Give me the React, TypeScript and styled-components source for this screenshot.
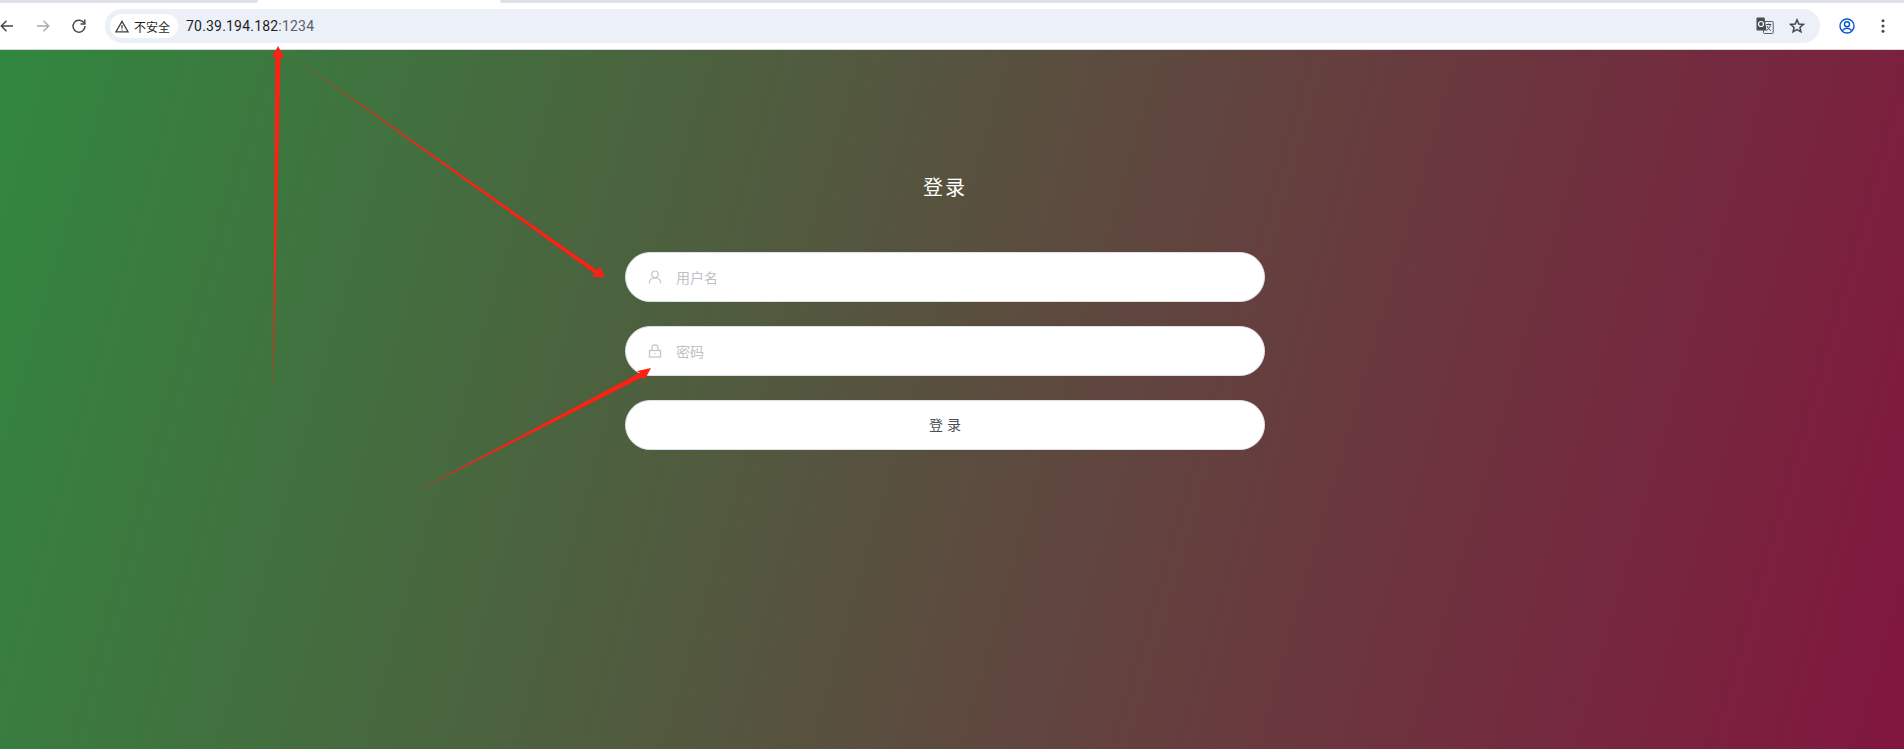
import React from "react";
import styled, { createGlobalStyle } from "styled-components";

const Global = createGlobalStyle`
  html, body { margin: 0; padding: 0; height: 100%; overflow: hidden; background: #fff; }
  #root { height: 100%; }
  * { box-sizing: border-box; }
`;

const Shell = styled.div`
  position: relative;
  height: 749px;
  width: 1904px;
  display: flex;
  flex-direction: column;
  overflow: hidden;
  font-family: "Noto Sans CJK SC", "Noto Sans", sans-serif;
`;

const Chrome = styled.header`
  flex: 0 0 50px;
  display: flex;
  flex-direction: column;
  background: #fff;
  border-bottom: 1px solid #d6d8da;
`;

const TabStrip = styled.div`
  flex: 0 0 9px;
  display: flex;
  align-items: flex-start;
`;

const TabEdge = styled.div<{ $w?: number }>`
  height: 3px;
  background: #dde3e9;
  ${(p) => (p.$w ? `flex: 0 0 ${p.$w}px; border-radius: 0 0 8px 0;` : `flex: 1; border-radius: 0 0 0 8px;`)}
`;

const ActiveTab = styled.div`
  flex: 0 0 242px;
`;

const Toolbar = styled.div`
  flex: 1;
  display: flex;
  align-items: flex-start;
  padding-right: 3px;
`;

const NavSlot = styled.div<{ $first?: boolean }>`
  flex: 0 0 36px;
  height: 34px;
  display: flex;
  align-items: center;
  justify-content: center;
  margin-left: ${(p) => (p.$first ? "-11px" : "0")};
`;

const Omnibox = styled.div`
  flex: 1;
  height: 34px;
  margin: 0 9px 0 8px;
  padding-left: 5px;
  display: flex;
  align-items: center;
  background: #ebf0f9;
  border-radius: 17px;
`;

const SecurityChip = styled.div`
  flex: 0 0 68px;
  height: 24px;
  display: flex;
  align-items: center;
  gap: 5px;
  padding-left: 5px;
  background: #fff;
  border-radius: 12px;
  font-size: 12px;
  color: #1f1f1f;
  white-space: nowrap;
`;

const Url = styled.div`
  margin-left: 8px;
  flex: 1;
  font-family: Roboto, "Liberation Sans", sans-serif;
  font-size: 14px;
  letter-spacing: 0.2px;
  color: #1f1f1f;
`;

const UrlPort = styled.span`
  color: #5a5f66;
`;

const OmniSlot = styled.div<{ $last?: boolean }>`
  flex: 0 0 32px;
  height: 34px;
  display: flex;
  align-items: center;
  justify-content: center;
  margin-right: ${(p) => (p.$last ? "7px" : "0")};
`;

const Page = styled.main`
  flex: 1;
  display: flex;
  justify-content: center;
  padding-right: 14px;
  background: linear-gradient(106deg, #31873f 0%, #82163e 100%);
`;

const LoginForm = styled.form`
  width: 640px;
  display: flex;
  flex-direction: column;
  gap: 24px;
  padding-top: 122px;
`;

const Title = styled.h1`
  margin: 0 0 27px;
  height: 29px;
  line-height: 29px;
  text-align: center;
  font-size: 20px;
  font-weight: 400;
  letter-spacing: 2px;
  color: #fff;
`;

const Field = styled.label`
  height: 50px;
  display: flex;
  align-items: center;
  gap: 14px;
  padding-left: 22px;
  background: #fff;
  border: 1px solid #dcdfe6;
  border-radius: 25px;
`;

const FieldInput = styled.input`
  flex: 1;
  min-width: 0;
  height: 100%;
  padding: 0;
  border: 0;
  outline: 0;
  background: transparent;
  font-family: inherit;
  font-size: 14px;
  color: #606266;
  &::placeholder { color: #bfc1c6; opacity: 1; }
`;

const SubmitButton = styled.button`
  height: 50px;
  padding: 0 0 3px;
  background: #fff;
  border: 1px solid #dcdfe6;
  border-radius: 25px;
  font-family: inherit;
  font-size: 14px;
  word-spacing: 1px;
  color: #4a4f55;
`;

const AnnotationLayer = styled.svg`
  position: absolute;
  left: 0;
  top: 0;
  pointer-events: none;
`;

const Back = ({ color = "#474747" }: { color?: string }) => (
  <svg width="16" height="16" viewBox="0 0 16 16" fill="none" stroke={color} strokeWidth="1.5">
    <path d="M14 8H2.5M7.5 2.8 2.3 8l5.2 5.2" />
  </svg>
);

const Forward = () => (
  <svg width="16" height="16" viewBox="0 0 16 16" fill="none" stroke="#a9abad" strokeWidth="1.5">
    <path d="M2 8h11.5M8.500 2.800 13.700 8l-5.200 5.200" />
  </svg>
);

const Reload = () => (
  <svg width="16" height="16" viewBox="0 0 16 16" fill="none" stroke="#474747" strokeWidth="1.5">
    <path d="M13.200 5.200A6 6 0 1 0 14 8" />
    <path d="M13.800 1.600v4.300H9.500" />
  </svg>
);

const Warning = () => (
  <svg width="14" height="13" viewBox="0 0 14 13" fill="none">
    <path d="M7 1.400 13 11.800H1z" stroke="#3c3c3c" strokeWidth="1.300" strokeLinejoin="miter" />
    <path d="M7 5v3.600M7 9.400v1.200" stroke="#3c3c3c" strokeWidth="1.200" />
  </svg>
);

const Translate = () => (
  <svg width="18" height="18" viewBox="0 0 18 18">
    <rect x="7.500" y="4.500" width="9.700" height="12" rx="0.800" fill="#e9eff9" stroke="#5c5f63" strokeWidth="1" />
    <path d="M1.500 0.500h7l2 13h-9a1 1 0 0 1-1-1V1.500a1 1 0 0 1 1-1z" fill="#4a4c50" />
    <circle cx="5" cy="7" r="2.500" fill="none" stroke="#fff" strokeWidth="1.200" />
    <path d="M10.200 7.500h5M12.700 6.500v1M14.500 7.500c-.8 3-2.200 5-4 6M11 9c.8 2 2 3.500 3.800 4.500" fill="none" stroke="#4a4c50" strokeWidth="1" />
  </svg>
);

const Star = () => (
  <svg width="16" height="16" viewBox="0 0 16 16" fill="none" stroke="#474747" strokeWidth="1.500">
    <path d="M8 1.900 9.800 6l4.500.4-3.400 3 1 4.400L8 11.500l-3.900 2.300 1-4.400-3.400-3L6.200 6z" strokeLinejoin="miter" />
  </svg>
);

const Profile = () => (
  <svg width="16" height="16" viewBox="0 0 16 16" fill="none" stroke="#0b57d0" strokeWidth="1.400">
    <circle cx="8" cy="8" r="7" />
    <circle cx="8" cy="6.200" r="2.500" />
    <path d="M3.400 12.600c1.200-1.700 2.800-2.400 4.600-2.400s3.400.7 4.600 2.400" />
  </svg>
);

const Dots = () => (
  <svg width="16" height="16" viewBox="0 0 16 16" fill="#474747">
    <circle cx="8" cy="2.800" r="1.500" />
    <circle cx="8" cy="8" r="1.500" />
    <circle cx="8" cy="13.200" r="1.500" />
  </svg>
);

const UserIcon = () => (
  <svg width="14" height="14" viewBox="0 0 14 14" fill="none" stroke="#c6c6c6" strokeWidth="1.200">
    <circle cx="7" cy="4.300" r="3.300" />
    <path d="M1.300 13.500c0-3.300 2.300-5.500 5.700-5.500s5.700 2.200 5.700 5.500" />
  </svg>
);

const LockIcon = () => (
  <svg width="14" height="14" viewBox="0 0 14 14" fill="none" stroke="#c6c6c6" strokeWidth="1.300">
    <rect x="1.500" y="6.500" width="11" height="6.500" />
    <path d="M4 6.500V3.800a3 3 0 0 1 6 0v2.700" />
    <path d="M7 9.300v1" strokeWidth="1.400" />
  </svg>
);

const App = () => (
  <Shell>
    <Global />
    <Chrome>
      <TabStrip>
        <TabEdge $w={258} />
        <ActiveTab />
        <TabEdge />
      </TabStrip>
      <Toolbar>
        <NavSlot $first><Back /></NavSlot>
        <NavSlot><Forward /></NavSlot>
        <NavSlot><Reload /></NavSlot>
        <Omnibox>
          <SecurityChip><Warning />不安全</SecurityChip>
          <Url>70.39.194.182<UrlPort>:1234</UrlPort></Url>
          <OmniSlot><Translate /></OmniSlot>
          <OmniSlot $last><Star /></OmniSlot>
        </Omnibox>
        <NavSlot><Profile /></NavSlot>
        <NavSlot><Dots /></NavSlot>
      </Toolbar>
    </Chrome>
    <Page>
      <LoginForm onSubmit={(e) => e.preventDefault()}>
        <Title>登录</Title>
        <Field><UserIcon /><FieldInput placeholder="用户名" /></Field>
        <Field><LockIcon /><FieldInput placeholder="密码" /></Field>
        <SubmitButton type="button">登 录</SubmitButton>
      </LoginForm>
    </Page>
    <AnnotationLayer width="1904" height="749" viewBox="0 0 1904 749" fill="#ff2014">
      <polygon points="273,397 275.300,57 272,57 278,46 284,57 280.500,57" />
      <polygon points="295,58 597.150,270.370 600,267 605,277 592,277 594.850,273.630" />
      <polygon points="413,493 639.840,372.790 637,371 651,368 645,379 642.160,377.210" />
    </AnnotationLayer>
  </Shell>
);

export default App;
